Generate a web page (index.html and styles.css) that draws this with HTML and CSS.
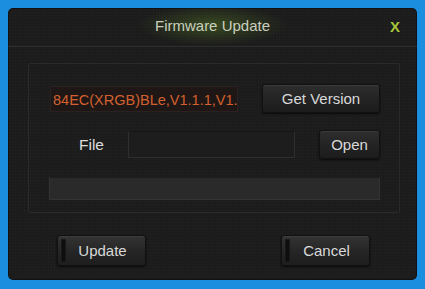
FILE: index.html
```html
<!DOCTYPE html>
<html>
<head>
<meta charset="utf-8">
<link rel="stylesheet" href="styles.css">
</head>
<body>
<div class="frame">
  <div class="panel">
    <div class="titlebar">
      <span></span>
      <div class="title">Firmware Update</div>
      <div class="close">X</div>
    </div>
    <div class="group">
      <div class="row row-version">
        <div class="version">84EC(XRGB)BLe,V1.1.1,V1.</div>
        <button class="btn btn-get">Get Version</button>
      </div>
      <div class="row row-file">
        <div class="label">File</div>
        <div class="file-input"></div>
        <button class="btn btn-open">Open</button>
      </div>
      <div class="progress"></div>
    </div>
    <div class="footer">
      <button class="btn btn-big btn-update"><span class="stripe"></span><span class="btxt">Update</span></button>
      <button class="btn btn-big btn-cancel"><span class="stripe"></span><span class="btxt">Cancel</span></button>
    </div>
  </div>
</div>
</body>
</html>
```

FILE: styles.css
```css
html, body {
  margin: 0;
  padding: 0;
  background: #1b8ee0;
}
.frame {
  width: 425px;
  height: 289px;
  box-sizing: border-box;
  padding: 8px 8px 9px 8px;
  background: #1b8ee0;
  font-family: "Liberation Sans", Arial, sans-serif;
}
.panel {
  height: 100%;
  box-sizing: border-box;
  background-color: #1c1c1c;
  background-image: radial-gradient(rgba(255,255,255,0.03) 1px, transparent 1px);
  background-size: 3px 3px;
  border-radius: 5px;
  display: flex;
  flex-direction: column;
  box-shadow: inset 0 0 0 1px #111;
}
.titlebar {
  height: 38px;
  display: grid;
  grid-template-columns: 1fr auto 1fr;
  align-items: center;
  border-bottom: 1px solid #2e2e2e;
  background: radial-gradient(ellipse 75px 20px at 50% 45%, rgba(110,160,40,0.34), rgba(110,160,40,0) 100%);
}
.title {
  color: #c9cfbd;
  font-size: 15px;
  padding-bottom: 4px;
}
.close {
  justify-self: end;
  color: #a6c43a;
  font-weight: bold;
  font-size: 15px;
  margin-right: 17px;
  padding-bottom: 2px;
}
.group {
  margin: 16px 17px 0 20px;
  border: 1px solid #2a2a2a;
  border-radius: 2px;
  padding: 20px 19px 12px 20px;
  display: flex;
  flex-direction: column;
}
.row {
  display: flex;
  align-items: center;
}
.row-version {
  height: 29px;
}
.version {
  width: 188px;
  height: 26px;
  margin-left: 1px;
  line-height: 26px;
  padding-left: 2px;
  background: #1f1715;
  border: 1px solid #2a2220;
  box-sizing: border-box;
  color: #d2612f;
  font-size: 14.5px;
  white-space: nowrap;
  overflow: hidden;
}
.btn {
  font-family: "Liberation Sans", Arial, sans-serif;
  color: #d9d9d9;
  font-size: 15px;
  background: linear-gradient(#2e2e2e, #242424 50%, #1c1c1c);
  border: 1px solid #111;
  box-shadow: inset 0 1px 0 #3c3c3c, 0 1px 2px #0a0a0a;
  border-radius: 3px;
  padding: 0;
  box-sizing: border-box;
}
.btn-get {
  margin-left: auto;
  width: 118px;
  height: 29px;
}
.row-file {
  margin-top: 17px;
  height: 29px;
}
.label {
  color: #dcdcdc;
  font-size: 15.5px;
  margin-left: 30px;
  width: 49px;
}
.file-input {
  width: 167px;
  height: 27px;
  box-sizing: border-box;
  background: #1d1d1d;
  border: 1px solid #2e2e2e;
  border-top-color: #151515;
}
.btn-open {
  margin-left: auto;
  width: 61px;
  height: 29px;
}
.progress {
  margin-top: 18px;
  height: 23px;
  width: 331px;
  box-sizing: border-box;
  background: #2a2a2a;
  border: 1px solid #333;
  border-top-color: #1e1e1e;
}
.footer {
  margin-top: 22px;
  display: flex;
  padding-left: 49px;
}
.btn-big {
  width: 89px;
  height: 31px;
  display: flex;
  align-items: stretch;
  background: linear-gradient(#333, #262626 50%, #1e1e1e);
}
.btn-cancel {
  margin-left: 135px;
}
.stripe {
  width: 5px;
  margin: 3px 0 3px 3px;
  background: #0e0e0e;
  border-radius: 2px;
  box-shadow: inset 0 0 0 1px #181818;
}
.btxt {
  flex: 1;
  display: flex;
  align-items: center;
  justify-content: center;
  padding-right: 6px;
}
```
